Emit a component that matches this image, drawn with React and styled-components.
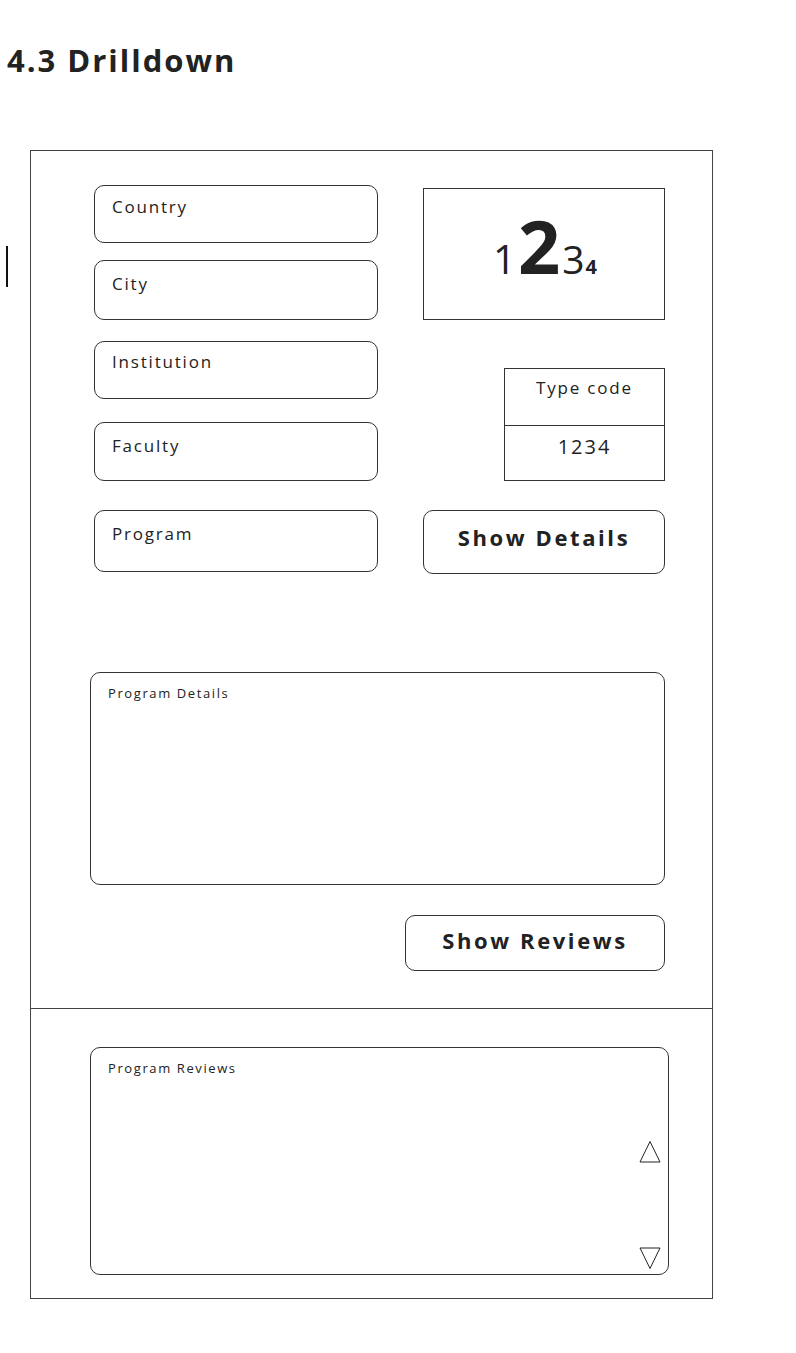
import styled, { createGlobalStyle } from 'styled-components'

const Global = createGlobalStyle`
  body {
    margin: 0;
    background: #fff;
    font-family: "Open Sans", "Noto Sans", sans-serif;
    color: #222;
  }
`

const Page = styled.div`
  width: 796px;
  min-height: 1353px;
`

const Header = styled.h1`
  box-sizing: border-box;
  height: 150px;
  margin: 0;
  padding: 42px 0 0 7px;
  font-size: 31px;
  line-height: 36px;
  font-weight: 700;
  letter-spacing: 2px;
  color: #222;
`

const Row = styled.div`
  display: flex;
  align-items: flex-start;
`

// stray text caret left of the frame
const Caret = styled.span`
  display: block;
  width: 2px;
  height: 41px;
  margin: 96px 22px 0 6px;
  background: #111;
`

const Frame = styled.div`
  box-sizing: border-box;
  width: 683px;
  height: 1149px;
  border: 1px solid #444;
  display: flex;
  flex-direction: column;
`

const TopSection = styled.section`
  padding: 34px 0 0 59px;
  height: 858px;
  box-sizing: border-box;
  border-bottom: 1px solid #444;
  display: flex;
  flex-direction: column;
  align-items: flex-start;
`

const Columns = styled.div`
  display: flex;
  gap: 45px;
  margin-left: 4px;
`

const FieldCol = styled.div`
  display: flex;
  flex-direction: column;
  width: 284px;
`

const Field = styled.div`
  box-sizing: border-box;
  height: ${(p) => p.h}px;
  margin-top: ${(p) => p.gap || 0}px;
  border: 1px solid #333;
  border-radius: 10px;
  padding: ${(p) => p.pt || 12}px 17px 0;
  font-size: 17px;
  letter-spacing: 1.8px;
  line-height: 22px;
`

const SideCol = styled.div`
  display: flex;
  flex-direction: column;
  align-items: flex-end;
  width: 242px;
  padding-top: 3px;
`

const NumberBox = styled.div`
  box-sizing: border-box;
  width: 242px;
  height: 132px;
  border: 1px solid #333;
  display: flex;
  align-items: center;
  justify-content: center;
  padding: 0 0 16px 2px;
`

const Number = styled.span`
  line-height: 1;
  white-space: nowrap;
`

const Digit = styled.span`
  font-size: ${(p) => p.size}px;
  font-weight: ${(p) => (p.bold ? 700 : 400)};
  margin-right: ${(p) => p.mr || 0}px;
`

const CodeTable = styled.div`
  box-sizing: border-box;
  width: 161px;
  margin-top: 48px;
  border: 1px solid #333;
`

const CodeCell = styled.div`
  box-sizing: border-box;
  height: ${(p) => p.h}px;
  text-align: center;
  padding-top: ${(p) => p.pt}px;
  font-size: ${(p) => p.size}px;
  letter-spacing: ${(p) => p.ls}px;
  line-height: 22px;
  & + & {
    border-top: 1px solid #333;
  }
`

const Button = styled.button`
  box-sizing: border-box;
  width: ${(p) => p.w}px;
  height: ${(p) => p.h}px;
  margin-top: ${(p) => p.gap}px;
  border: 1px solid #333;
  border-radius: 10px;
  background: #fff;
  font-family: "Open Sans", "Noto Sans", sans-serif;
  font-size: 22px;
  font-weight: 700;
  letter-spacing: 2.6px;
  color: #222;
  padding: 0 0 ${(p) => p.pb || 7}px;
`

const Panel = styled.div`
  position: relative;
  box-sizing: border-box;
  width: ${(p) => p.w}px;
  height: ${(p) => p.h}px;
  margin-top: ${(p) => p.gap || 0}px;
  border: 1px solid #333;
  border-radius: 10px;
  padding: 11px 17px;
  font-size: 13px;
  letter-spacing: 1.6px;
  line-height: 18px;
`

const ReviewsButtonRow = styled.div`
  display: flex;
  justify-content: flex-end;
  width: 575px;
`

const BottomSection = styled.section`
  padding: 38px 0 0 59px;
`

const Scroller = styled.div`
  position: absolute;
  right: 7px;
  top: 92px;
  bottom: 4px;
  display: flex;
  flex-direction: column;
  justify-content: space-between;
`

const Arrow = ({ down }) => (
  <svg width="22" height="23" viewBox="0 0 22 23">
    <polygon
      points={down ? '1,1 21,1 11,21.5' : '11,1.5 21,22 1,22'}
      fill="none"
      stroke="#222"
      strokeWidth="1"
    />
  </svg>
)

export default function App() {
  return (
    <Page>
      <Global />
      <Header>4.3 Drilldown</Header>
      <Row>
        <Caret />
        <Frame>
          <TopSection>
            <Columns>
              <FieldCol>
                <Field h={58} pt={10}>Country</Field>
                <Field h={60} gap={17} pt={12}>City</Field>
                <Field h={58} gap={21} pt={9}>Institution</Field>
                <Field h={59} gap={23} pt={12}>Faculty</Field>
                <Field h={62} gap={29} pt={12}>Program</Field>
              </FieldCol>
              <SideCol>
                <NumberBox>
                  <Number>
                    <Digit size={40} mr={2}>1</Digit>
                    <Digit size={74} bold mr={2}>2</Digit>
                    <Digit size={39} mr={1}>3</Digit>
                    <Digit size={20} bold>4</Digit>
                  </Number>
                </NumberBox>
                <CodeTable>
                  <CodeCell h={56} pt={8} size={17} ls={1.8}>Type code</CodeCell>
                  <CodeCell h={55} pt={10} size={20} ls={2}>1234</CodeCell>
                </CodeTable>
                <Button w={242} h={64} gap={29} pb={10}>Show Details</Button>
              </SideCol>
            </Columns>
            <Panel w={575} h={213} gap={98}>Program Details</Panel>
            <ReviewsButtonRow>
              <Button w={260} h={56} gap={30} pb={6}>Show Reviews</Button>
            </ReviewsButtonRow>
          </TopSection>
          <BottomSection>
            <Panel w={579} h={228}>
              Program Reviews
              <Scroller>
                <Arrow />
                <Arrow down />
              </Scroller>
            </Panel>
          </BottomSection>
        </Frame>
      </Row>
    </Page>
  )
}
